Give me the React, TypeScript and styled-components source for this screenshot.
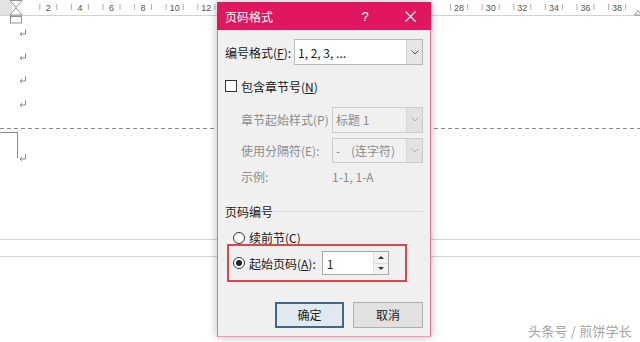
import React from 'react';
import styled, { createGlobalStyle } from 'styled-components';

const Global = createGlobalStyle`
  html, body { margin: 0; padding: 0; background: #fff; }
  body {
    width: 640px; height: 342px; overflow: hidden;
    font-family: "Noto Sans CJK SC", "Noto Sans", sans-serif;
  }
`;

const ACCENT = '#e0165e';

const Page = styled.div`
  position: relative;
  width: 640px;
  height: 342px;
  overflow: hidden;
  background: #fff;
`;

const RulerBar = styled.div`
  height: 16px;
  display: block;
  svg { display: block; }
`;

const IndentMarker = styled.div`
  position: absolute;
  left: 9px;
  top: 0;
  width: 14px;
  height: 24px;
  svg { display: block; }
`;

const DocBody = styled.div`
  padding-top: 5.5px;
  display: flex;
  flex-direction: column;
`;

const ParaRow = styled.div`
  height: 23.5px;
  display: flex;
  align-items: center;
  padding-left: 19px;
`;

const DashedRule = styled.div`
  margin-top: 12.5px;
  height: 1px;
  background-image: repeating-linear-gradient(90deg, #8a8a8a 0 4px, transparent 4px 7px);
`;

const HeaderSection = styled.div`
  margin-top: 2.5px;
  display: flex;
  align-items: flex-end;
`;

const Corner = styled.div`
  width: 18px;
  height: 26px;
  box-sizing: border-box;
  border-top: 1px solid #8a8a8a;
  border-right: 1px solid #8a8a8a;
`;

const CornerMark = styled.div`
  margin-left: 1px;
  margin-bottom: -4px;
  display: flex;
`;

const PageGap = styled.div`
  margin-top: 81.5px;
  height: 16px;
  border-top: 1px solid #d4d4d4;
  border-bottom: 1px solid #d4d4d4;
`;

const Watermark = styled.div`
  position: absolute;
  right: 8px;
  bottom: 2px;
  font-size: 13px;
  line-height: 18px;
  color: #a3a3a3;
  text-shadow: 0 0 1px #fff, 0 0 2px #fff;
  letter-spacing: 0.2px;
`;

/* Dialog */
const Dialog = styled.div`
  position: absolute;
  left: 217px;
  top: 2px;
  width: 214px;
  height: 335px;
  box-sizing: border-box;
  border: 1px solid ${ACCENT};
  border-bottom-color: #d9a3b6;
  border-left-color: #e8709b;
  border-right-color: #e8709b;
  background: #f0f0f0;
  box-shadow: 0 0 9px rgba(0, 0, 0, 0.28);
  display: flex;
  flex-direction: column;
  font-size: 12px;
  color: #1a1a1a;
`;

const TitleBar = styled.div`
  height: 27px;
  margin: -1px -1px 0 -1px;
  padding-top: 1px;
  background: ${ACCENT};
  display: flex;
  align-items: center;
  color: #fff;
`;

const Title = styled.div`
  flex: 1;
  padding-left: 8px;
  font-size: 12px;
`;

const HelpButton = styled.div`
  width: 30px;
  text-align: center;
  font-family: "Liberation Sans", sans-serif;
  font-size: 13px;
  margin-right: 9px;
`;

const CloseButton = styled.div`
  width: 42px;
  display: flex;
  justify-content: center;
  align-items: center;
  svg { display: block; }
`;

const Body = styled.div`
  padding: 9px 7px 8px 7px;
  display: flex;
  flex-direction: column;
`;

const FieldRow = styled.div<{ $h: number; $mt?: number }>`
  height: ${p => p.$h}px;
  margin-top: ${p => p.$mt ?? 0}px;
  display: flex;
  align-items: center;
  position: relative;
`;

const Label = styled.span<{ $w?: number; $dim?: boolean }>`
  ${p => (p.$w ? `width: ${p.$w}px;` : '')}
  flex-shrink: 0;
  color: ${p => (p.$dim ? '#8d8d8d' : '#1a1a1a')};
  white-space: nowrap;
`;

const SelectBox = styled.div<{ $w: number; $disabled?: boolean }>`
  width: ${p => p.$w}px;
  height: 100%;
  margin-left: auto;
  box-sizing: border-box;
  border: 1px solid ${p => (p.$disabled ? '#cccccc' : '#b9b9b9')};
  background: ${p => (p.$disabled ? '#f0f0f0' : '#ffffff')};
  display: flex;
  align-items: stretch;
`;

const SelectValue = styled.div<{ $disabled?: boolean }>`
  flex: 1;
  padding-left: 3px;
  display: flex;
  align-items: center;
  color: ${p => (p.$disabled ? '#8d8d8d' : '#1a1a1a')};
  white-space: pre;
`;

const SelectArrow = styled.div<{ $disabled?: boolean }>`
  width: 15px;
  background: ${p => (p.$disabled ? '#e2e2e2' : '#e6e6e6')};
  border-left: 1px solid ${p => (p.$disabled ? '#d6d6d6' : '#cfcfcf')};
  display: flex;
  align-items: center;
  justify-content: center;
  svg { display: block; }
`;

const CheckBox = styled.div`
  width: 12px;
  height: 12px;
  box-sizing: border-box;
  border: 1px solid #333;
  background: #fff;
  margin-right: 4px;
`;

const SubGroup = styled.div`
  padding-left: 16px;
  display: flex;
  flex-direction: column;
`;

const GroupLine = styled.div`
  flex: 1;
  margin-left: 2px;
  height: 0;
  border-top: 1px solid #dadada;
`;

const RadioRow = styled(FieldRow)`
  padding-left: 8px;
`;

const Radio = styled.div<{ $checked?: boolean }>`
  width: 12px;
  height: 12px;
  box-sizing: border-box;
  border-radius: 50%;
  border: 1px solid #333;
  background: #fff;
  margin-right: 4px;
  display: flex;
  align-items: center;
  justify-content: center;
  &::after {
    content: '';
    display: ${p => (p.$checked ? 'block' : 'none')};
    width: 6px;
    height: 6px;
    border-radius: 50%;
    background: #222;
  }
`;

const Spin = styled.div`
  margin-left: 6px;
  width: 67px;
  height: 24px;
  box-sizing: border-box;
  border: 1px solid #a8a8a8;
  background: #fff;
  display: flex;
`;

const SpinValue = styled.div`
  flex: 1;
  padding-left: 4px;
  display: flex;
  align-items: center;
`;

const SpinButtons = styled.div`
  width: 14px;
  display: flex;
  flex-direction: column;
  border-left: 1px solid #e0e0e0;
`;

const SpinHalf = styled.div<{ $down?: boolean }>`
  flex: 1;
  background: #f2f2f2;
  display: flex;
  align-items: center;
  justify-content: center;
  ${p => (p.$down ? 'border-top: 1px solid #dcdcdc;' : '')}
  &::after {
    content: '';
    width: 0;
    height: 0;
    border-left: 3px solid transparent;
    border-right: 3px solid transparent;
    ${p => (p.$down ? 'border-top: 3px solid #333;' : 'border-bottom: 3px solid #333;')}
  }
`;

const Highlight = styled.div`
  position: absolute;
  left: 2px;
  width: 180px;
  top: -7px;
  bottom: -6px;
  box-sizing: border-box;
  border: 2px solid #d24a4d;
  pointer-events: none;
`;

const ButtonRow = styled.div`
  margin-top: 26px;
  height: 26.5px;
  display: flex;
  justify-content: flex-end;
  gap: 9px;
`;

const DlgButton = styled.div<{ $primary?: boolean }>`
  width: ${p => (p.$primary ? 69 : 70)}px;
  box-sizing: border-box;
  border: ${p => (p.$primary ? '2px solid #3a6b8d' : '1px solid #b0b0b0')};
  background: ${p => (p.$primary ? '#e1e9ef' : '#e1e1e1')};
  display: flex;
  align-items: center;
  justify-content: center;
  color: #1a1a1a;
`;

const ReturnMark = () => (
  <svg width="8" height="8" viewBox="0 0 8 8">
    <path d="M6.5 0.5 V5 H1.5" fill="none" stroke="#8a8a8a" strokeWidth="1" />
    <path d="M3 3.3 L1 5 L3 6.7" fill="none" stroke="#8a8a8a" strokeWidth="1" />
  </svg>
);

const Chevron = ({ color = '#555' }: { color?: string }) => (
  <svg width="8" height="5" viewBox="0 0 8 5">
    <polyline points="0.5,0.5 4,4 7.5,0.5" fill="none" stroke={color} strokeWidth="1" />
  </svg>
);

const Ruler = () => {
  const nums: number[] = [];
  for (let n = 2; n <= 38; n += 2) if (n <= 12 || n >= 28) nums.push(n);
  const xOf = (n: number) => 48.3 + (n - 2) * 15.8;
  return (
    <svg width="640" height="16" viewBox="0 0 640 16">
      <rect x="0" y="0" width="640" height="16" fill="#ffffff" />
      <rect x="0" y="0" width="12" height="15" fill="#e3e3e3" />
      <line x1="0" y1="15.5" x2="640" y2="15.5" stroke="#d2d2d2" strokeWidth="1" />
      {nums.map(n => (
        <g key={n}>
          <line x1={xOf(n) - 8.5} y1="4" x2={xOf(n) - 8.5} y2="10" stroke="#9a9a9a" strokeWidth="0.8" />
          <line x1={xOf(n) + 8.5} y1="4" x2={xOf(n) + 8.5} y2="10" stroke="#9a9a9a" strokeWidth="0.8" />
          <text
            x={xOf(n)}
            y="10.5"
            textAnchor="middle"
            fontSize="9"
            fontFamily="Liberation Sans, sans-serif"
            fill="#555"
          >
            {n}
          </text>
        </g>
      ))}
      <path d="M634.5 15 L638 10.5 L641.5 15 Z" fill="#fff" stroke="#777" strokeWidth="0.8" />
    </svg>
  );
};

const Hourglass = () => (
  <svg width="14" height="24" viewBox="0 0 14 24">
    <path d="M1 0.5 H13 L7 7.3 Z" fill="#fff" stroke="#777" strokeWidth="0.8" />
    <path d="M7 7.7 L13 15 H1 Z" fill="#fff" stroke="#777" strokeWidth="0.8" />
    <rect x="1.5" y="16.5" width="11" height="6.5" fill="#fff" stroke="#777" strokeWidth="0.8" />
  </svg>
);

export default function App() {
  return (
    <Page>
      <Global />
      <RulerBar>
        <Ruler />
      </RulerBar>
      <IndentMarker>
        <Hourglass />
      </IndentMarker>
      <DocBody>
        <ParaRow><ReturnMark /></ParaRow>
        <ParaRow><ReturnMark /></ParaRow>
        <ParaRow><ReturnMark /></ParaRow>
        <ParaRow><ReturnMark /></ParaRow>
        <DashedRule />
        <HeaderSection>
          <Corner />
          <CornerMark><ReturnMark /></CornerMark>
        </HeaderSection>
        <PageGap />
      </DocBody>

      <Watermark>头条号 / 煎饼学长</Watermark>

      <Dialog>
        <TitleBar>
          <Title>页码格式</Title>
          <HelpButton>?</HelpButton>
          <CloseButton>
            <svg width="11" height="11" viewBox="0 0 11 11">
              <path d="M0.5 0.5 L10.5 10.5 M10.5 0.5 L0.5 10.5" stroke="#fff" strokeWidth="1.1" />
            </svg>
          </CloseButton>
        </TitleBar>
        <Body>
          <FieldRow $h={26}>
            <Label>编号格式(<u>F</u>):</Label>
            <SelectBox $w={129}>
              <SelectValue>1, 2, 3, ...</SelectValue>
              <SelectArrow><Chevron /></SelectArrow>
            </SelectBox>
          </FieldRow>
          <FieldRow $h={22} $mt={10}>
            <CheckBox />
            <Label>包含章节号(<u>N</u>)</Label>
          </FieldRow>
          <SubGroup>
            <FieldRow $h={26} $mt={9.5}>
              <Label $w={91} $dim>章节起始样式(P)</Label>
              <SelectBox $w={91} $disabled>
                <SelectValue $disabled>标题 1</SelectValue>
                <SelectArrow $disabled><Chevron color="#b0b0b0" /></SelectArrow>
              </SelectBox>
            </FieldRow>
            <FieldRow $h={25} $mt={5}>
              <Label $w={91} $dim>使用分隔符(E):</Label>
              <SelectBox $w={91} $disabled>
                <SelectValue $disabled>{'-    (连字符)'}</SelectValue>
                <SelectArrow $disabled><Chevron color="#b0b0b0" /></SelectArrow>
              </SelectBox>
            </FieldRow>
            <FieldRow $h={20} $mt={4}>
              <Label $w={91} $dim>示例:</Label>
              <Label $dim>1-1, 1-A</Label>
            </FieldRow>
          </SubGroup>
          <FieldRow $h={18} $mt={16}>
            <Label>页码编号</Label>
            <GroupLine />
          </FieldRow>
          <RadioRow $h={18} $mt={8}>
            <Radio />
            <Label>续前节(C)</Label>
          </RadioRow>
          <RadioRow $h={25} $mt={4}>
            <Radio $checked />
            <Label>起始页码(<u>A</u>):</Label>
            <Spin>
              <SpinValue>1</SpinValue>
              <SpinButtons>
                <SpinHalf />
                <SpinHalf $down />
              </SpinButtons>
            </Spin>
            <Highlight />
          </RadioRow>
          <ButtonRow>
            <DlgButton $primary>确定</DlgButton>
            <DlgButton>取消</DlgButton>
          </ButtonRow>
        </Body>
      </Dialog>
    </Page>
  );
}
